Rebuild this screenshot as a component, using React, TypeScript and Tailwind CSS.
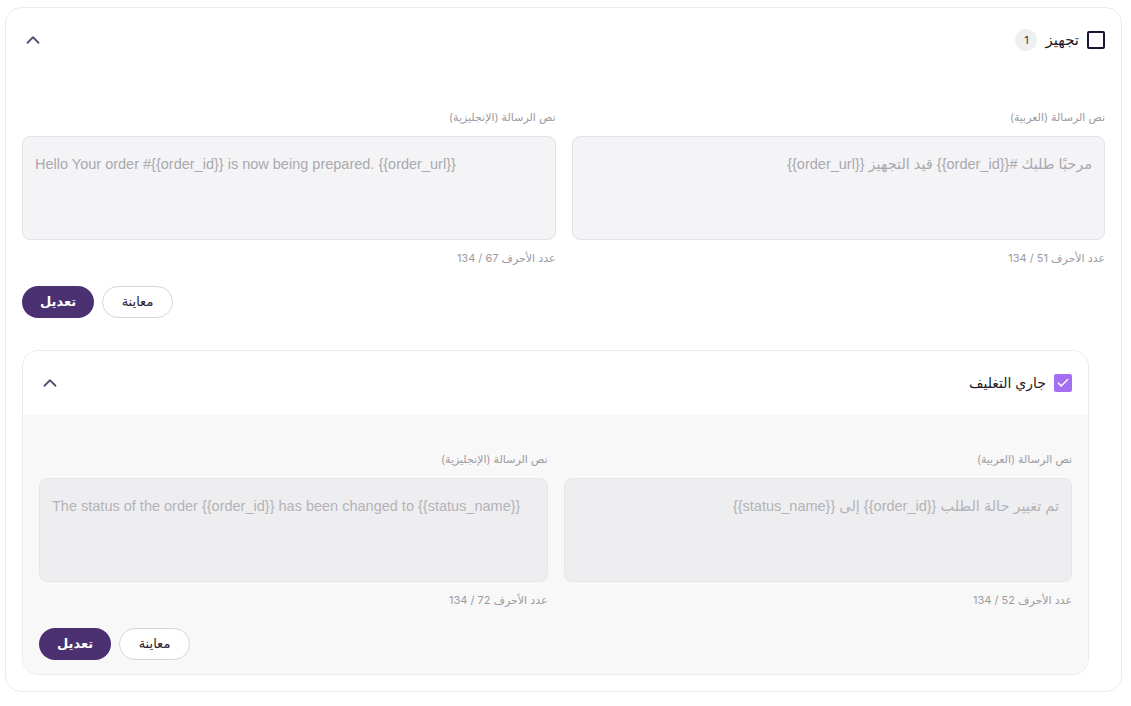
import { ChevronUp, Check } from "lucide-react";

type Msg = {
  ar: string;
  en: string;
  arCount: number;
  enCount: number;
};

// حقل نص الرسالة
function MessageField({
  label,
  text,
  count,
  ltr,
  muted,
}: {
  label: string;
  text: string;
  count: number;
  ltr?: boolean;
  muted?: boolean;
}) {
  return (
    <div className="flex flex-col">
      <p className="text-[11px] leading-4 text-[#9b9ba1]">{label}</p>
      <div
        dir={ltr ? "ltr" : "rtl"}
        className={`mt-[11px] h-[104px] rounded-lg border px-3 py-[15px] font-['Liberation_Sans','DejaVu_Sans',sans-serif] text-[14.5px] leading-6 ${
          muted
            ? "bg-[#eeeef0] border-[#e6e6e9] text-[#b3b3b8]"
            : "bg-[#f4f4f6] border-[#e4e4e8] text-[#a9a9ae]"
        }`}
      >
        {text}
      </div>
      <p className="mt-[10px] text-[11px] leading-4 text-[#9b9ba1]">
        عدد الأحرف {count} / 134
      </p>
    </div>
  );
}

function MessageBody({ msg, muted }: { msg: Msg; muted?: boolean }) {
  return (
    <>
      <div className="grid grid-cols-2 gap-4">
        <MessageField
          label="نص الرسالة (العربية)"
          text={msg.ar}
          count={msg.arCount}
          muted={muted}
        />
        <MessageField
          label="نص الرسالة (الإنجليزية)"
          text={msg.en}
          count={msg.enCount}
          ltr
          muted={muted}
        />
      </div>
      <div className="mt-5 flex justify-end gap-2">
        <button className="h-8 w-[71px] rounded-full border border-[#d6d6da] bg-white text-[13px] text-[#2a2233]">
          معاينة
        </button>
        <button className="h-8 w-[72px] rounded-full bg-[#4b3172] text-[13px] font-semibold text-white">
          تعديل
        </button>
      </div>
    </>
  );
}

export default function App() {
  const first: Msg = {
    ar: "مرحبًا طلبك #{{order_id}} قيد التجهيز {{order_url}}",
    en: "Hello Your order #{{order_id}} is now being prepared. {{order_url}}",
    arCount: 51,
    enCount: 67,
  };
  const second: Msg = {
    ar: "تم تغيير حالة الطلب {{order_id}} إلى {{status_name}}",
    en: "The status of the order {{order_id}} has been changed to {{status_name}}",
    arCount: 52,
    enCount: 72,
  };

  return (
    <div
      dir="rtl"
      className="min-h-screen bg-white pl-[5px] pr-[9px] pt-[7px] font-['Inter','DejaVu_Sans',sans-serif]"
    >
      <div className="rounded-2xl border border-[#ececee] bg-white pb-4">
        {/* الرأس */}
        <div className="flex h-16 items-center justify-between px-4">
          <div className="flex items-center gap-2">
            <span className="h-[18px] w-[18px] rounded-[2px] border-2 border-[#1e1030]" />
            <span className="text-[15px] text-[#1f1a26]">تجهيز</span>
            <span className="flex h-[22px] w-[22px] items-center justify-center rounded-full bg-[#efeff1] text-[11px] text-[#3a3540]">
              1
            </span>
          </div>
          <ChevronUp size={22} strokeWidth={2} className="text-[#5d4b74]" />
        </div>

        <div className="px-4 pt-[37px]">
          <MessageBody msg={first} />

          {/* الحالة الفرعية */}
          <div className="mr-4 mt-8 overflow-hidden rounded-2xl border border-[#ebebed]">
            <div className="flex h-16 items-center justify-between bg-white px-4">
              <div className="flex items-center gap-2">
                <span className="flex h-[18px] w-[18px] items-center justify-center rounded-[2px] bg-[#a46ff2]">
                  <Check size={14} strokeWidth={2.5} className="text-white" />
                </span>
                <span className="text-sm text-[#1f1a26]">جاري التغليف</span>
              </div>
              <ChevronUp size={22} strokeWidth={2} className="text-[#5d4b74]" />
            </div>
            <div className="bg-[#f8f8f8] px-4 pb-[14px] pt-[36px]">
              <MessageBody msg={second} muted />
            </div>
          </div>
        </div>
      </div>
    </div>
  );
}
